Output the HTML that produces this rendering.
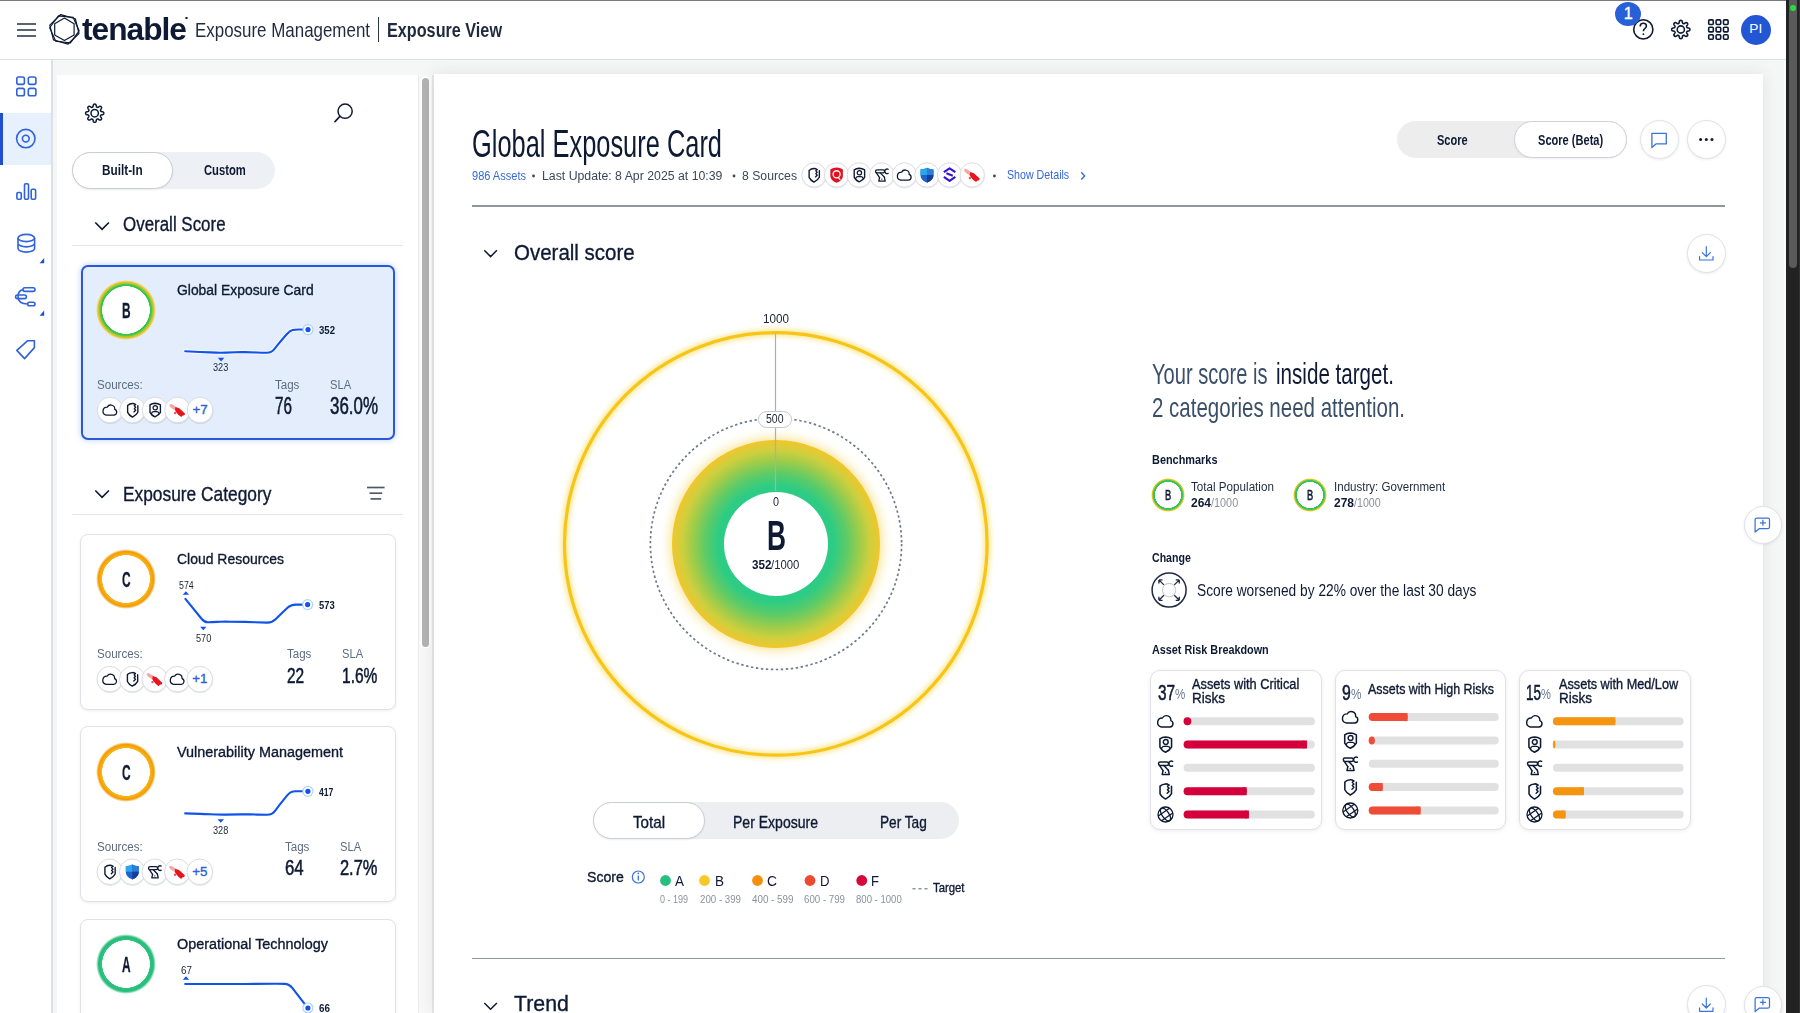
<!DOCTYPE html>
<html><head><meta charset="utf-8">
<style>
*{box-sizing:border-box;margin:0;padding:0}
html,body{width:1800px;height:1013px;overflow:hidden;background:#f5f6f6;font-family:"Liberation Sans",sans-serif;color:#0e1a33}
.a{position:absolute}
.t{position:absolute;white-space:nowrap;line-height:1;transform-origin:0 0}
.bd{font-weight:bold}
.m{-webkit-text-stroke:0.35px currentColor}
.sb{-webkit-text-stroke:0.55px currentColor}
.sl{-webkit-text-stroke:0.3px currentColor}
svg{position:absolute;overflow:visible}
#hdr{left:0;top:0;width:1786px;height:60px;background:#fff;border-top:1px solid #7a7a7a;border-bottom:1px solid #dcdfe4}
#nav{left:0;top:60px;width:53px;height:953px;background:#fff;border-right:2px solid #dde0e5}
#side{left:57px;top:75px;width:361px;height:938px;background:#fff}
#sbar{left:418px;top:75px;width:16px;height:938px;background:#f8f8f8;border-left:1px solid #eaeaea;border-right:2.5px solid #e8e8e8}
#sthumb{left:421.8px;top:78px;width:7.4px;height:568.7px;background:#b3b3b3;border-radius:4px;box-shadow:0 0 0 1.5px #fff}
#main{left:434px;top:74px;width:1328.5px;height:939px;background:#fff;box-shadow:0 0 16px rgba(0,0,0,.09)}
#rgut{left:1784px;top:60px;width:2px;height:953px;background:#fbfbfb}
#dark{left:1786px;top:0;width:14px;height:1013px;background:#222;border-right:1.3px solid #333}
#dark2{left:1789.3px;top:0;width:7.9px;height:268px;background:#5a5a5a;border-radius:0 0 4px 4px}
.nv{stroke:#2f62db;fill:none;stroke-width:1.6}
.dk{stroke:#0e1a33;fill:none;stroke-width:1.6}
</style></head><body>
<div id="hdr" class="a"></div>
<div id="nav" class="a"></div>
<div id="side" class="a"></div>
<div id="sbar" class="a"></div>
<div id="sthumb" class="a"></div>
<div id="main" class="a"></div>
<div id="rgut" class="a"></div>
<div id="dark" class="a"></div>
<div id="dark2" class="a"></div>
<div class="a" style="left:1789.5px;top:4.5px;width:6.5px;height:6.5px;border-radius:50%;background:#2bd940"></div>

<!-- HEADER -->
<svg style="left:0;top:0" width="1" height="1">
 <g stroke="#3a475b" stroke-width="1.7"><line x1="17" y1="24" x2="36" y2="24"></line><line x1="17" y1="30" x2="36" y2="30"></line><line x1="17" y1="36" x2="36" y2="36"></line></g>
 <g fill="none" stroke="#0e1a33" stroke-width="1.2" stroke-linejoin="round"><polygon points="64.40,18.10 74.10,23.70 74.10,34.90 64.40,40.50 54.70,34.90 54.70,23.70"></polygon><polygon points="60.72,14.55 75.33,18.74 79.01,33.49 68.08,44.05 53.47,39.86 49.79,25.11"></polygon><polygon points="58.38,15.78 73.10,17.33 79.12,30.85 70.42,42.82 55.70,41.27 49.68,27.75"></polygon></g>
</svg>
<span class="t bd" style="color: rgb(14, 26, 51); letter-spacing: -1px; font-size: 31.98px; top: 12.93px; transform: scaleX(0.9912); left: 82px;">tenable</span><div id="reg" class="a" style="left:185px;top:16.5px;width:2.6px;height:2.6px;border-radius:50%;border:0.7px solid #0e1a33"></div>
<span class="t" style="color: rgb(31, 42, 62); font-size: 20.93px; top: 19.68px; transform: scaleX(0.809); left: 195px;">Exposure Management</span>
<div class="a" style="left:377.5px;top:17px;width:1.5px;height:25px;background:#2a3548"></div>
<span class="t bd" style="color: rgb(31, 42, 62); font-size: 20.93px; top: 19.68px; transform: scaleX(0.7746); left: 387px;">Exposure View</span>

<svg style="left:0;top:0" width="1" height="1">
 <circle cx="1643.3" cy="29.4" r="9.6" class="dk" stroke-width="1.7"></circle>
 <path d="M1640.2 26.5 q0-3.2 3.1-3.2 q3.1 0 3.1 2.8 q0 1.6-1.6 2.5 q-1.4 0.8-1.4 2.6" class="dk" stroke-width="1.5"></path>
 <circle cx="1643.4" cy="34.2" r="0.9" fill="#0e1a33"></circle>
</svg>
<div class="a" style="left:1615px;top:1.5px;width:26px;height:24px;border-radius:50%;background:#2860d8"></div>
<span class="t m" style="color: rgb(255, 255, 255); font-size: 16.28px; top: 5.42px; left: 1623.78px;">1</span>
<svg style="left:0;top:0" width="1" height="1" id="hgear">
 <g transform="translate(1680.8 29.5)"><path class="dk" stroke-width="1.5" stroke-linejoin="round" d="M9.10 0.00 L9.09 0.24 L9.05 0.47 L8.98 0.71 L8.86 0.93 L8.65 1.14 L8.32 1.32 L7.86 1.46 L7.34 1.56 L6.88 1.65 L6.55 1.75 L6.32 1.87 L6.17 2.01 L6.07 2.15 L5.98 2.30 L5.91 2.45 L5.85 2.61 L5.81 2.77 L5.78 2.95 L5.79 3.15 L5.87 3.39 L6.04 3.70 L6.30 4.09 L6.59 4.53 L6.81 4.95 L6.92 5.31 L6.92 5.61 L6.85 5.85 L6.74 6.07 L6.60 6.26 L6.43 6.43 L6.26 6.60 L6.07 6.74 L5.85 6.85 L5.61 6.92 L5.31 6.92 L4.95 6.81 L4.53 6.59 L4.09 6.30 L3.70 6.04 L3.39 5.87 L3.15 5.79 L2.95 5.78 L2.77 5.81 L2.61 5.85 L2.45 5.91 L2.30 5.98 L2.15 6.07 L2.01 6.17 L1.87 6.32 L1.75 6.55 L1.65 6.88 L1.56 7.34 L1.46 7.86 L1.32 8.32 L1.14 8.65 L0.93 8.86 L0.71 8.98 L0.47 9.05 L0.24 9.09 L0.00 9.10 L-0.24 9.09 L-0.47 9.05 L-0.71 8.98 L-0.93 8.86 L-1.14 8.65 L-1.32 8.32 L-1.46 7.86 L-1.56 7.34 L-1.65 6.88 L-1.75 6.55 L-1.87 6.32 L-2.01 6.17 L-2.15 6.07 L-2.30 5.98 L-2.45 5.91 L-2.61 5.85 L-2.77 5.81 L-2.95 5.78 L-3.15 5.79 L-3.39 5.87 L-3.70 6.04 L-4.09 6.30 L-4.53 6.59 L-4.95 6.81 L-5.31 6.92 L-5.61 6.92 L-5.85 6.85 L-6.07 6.74 L-6.26 6.60 L-6.43 6.43 L-6.60 6.26 L-6.74 6.07 L-6.85 5.85 L-6.92 5.61 L-6.92 5.31 L-6.81 4.95 L-6.59 4.53 L-6.30 4.09 L-6.04 3.70 L-5.87 3.39 L-5.79 3.15 L-5.78 2.95 L-5.81 2.77 L-5.85 2.61 L-5.91 2.45 L-5.98 2.30 L-6.07 2.15 L-6.17 2.01 L-6.32 1.87 L-6.55 1.75 L-6.88 1.65 L-7.34 1.56 L-7.86 1.46 L-8.32 1.32 L-8.65 1.14 L-8.86 0.93 L-8.98 0.71 L-9.05 0.47 L-9.09 0.24 L-9.10 0.00 L-9.09 -0.24 L-9.05 -0.47 L-8.98 -0.71 L-8.86 -0.93 L-8.65 -1.14 L-8.32 -1.32 L-7.86 -1.46 L-7.34 -1.56 L-6.88 -1.65 L-6.55 -1.75 L-6.32 -1.87 L-6.17 -2.01 L-6.07 -2.15 L-5.98 -2.30 L-5.91 -2.45 L-5.85 -2.61 L-5.81 -2.77 L-5.78 -2.95 L-5.79 -3.15 L-5.87 -3.39 L-6.04 -3.70 L-6.30 -4.09 L-6.59 -4.53 L-6.81 -4.95 L-6.92 -5.31 L-6.92 -5.61 L-6.85 -5.85 L-6.74 -6.07 L-6.60 -6.26 L-6.43 -6.43 L-6.26 -6.60 L-6.07 -6.74 L-5.85 -6.85 L-5.61 -6.92 L-5.31 -6.92 L-4.95 -6.81 L-4.53 -6.59 L-4.09 -6.30 L-3.70 -6.04 L-3.39 -5.87 L-3.15 -5.79 L-2.95 -5.78 L-2.77 -5.81 L-2.61 -5.85 L-2.45 -5.91 L-2.30 -5.98 L-2.15 -6.07 L-2.01 -6.17 L-1.87 -6.32 L-1.75 -6.55 L-1.65 -6.88 L-1.56 -7.34 L-1.46 -7.86 L-1.32 -8.32 L-1.14 -8.65 L-0.93 -8.86 L-0.71 -8.98 L-0.47 -9.05 L-0.24 -9.09 L-0.00 -9.10 L0.24 -9.09 L0.47 -9.05 L0.71 -8.98 L0.93 -8.86 L1.14 -8.65 L1.32 -8.32 L1.46 -7.86 L1.56 -7.34 L1.65 -6.88 L1.75 -6.55 L1.87 -6.32 L2.01 -6.17 L2.15 -6.07 L2.30 -5.98 L2.45 -5.91 L2.61 -5.85 L2.77 -5.81 L2.95 -5.78 L3.15 -5.79 L3.39 -5.87 L3.70 -6.04 L4.09 -6.30 L4.53 -6.59 L4.95 -6.81 L5.31 -6.92 L5.61 -6.92 L5.85 -6.85 L6.07 -6.74 L6.26 -6.60 L6.43 -6.43 L6.60 -6.26 L6.74 -6.07 L6.85 -5.85 L6.92 -5.61 L6.92 -5.31 L6.81 -4.95 L6.59 -4.53 L6.30 -4.09 L6.04 -3.70 L5.87 -3.39 L5.79 -3.15 L5.78 -2.95 L5.81 -2.77 L5.85 -2.61 L5.91 -2.45 L5.98 -2.30 L6.07 -2.15 L6.17 -2.01 L6.32 -1.87 L6.55 -1.75 L6.88 -1.65 L7.34 -1.56 L7.86 -1.46 L8.32 -1.32 L8.65 -1.14 L8.86 -0.93 L8.98 -0.71 L9.05 -0.47 L9.09 -0.24 Z"></path><circle r="3.6" class="dk" stroke-width="1.5"></circle></g>
</svg>
<svg style="left:0;top:0" width="1" height="1">
 <g class="dk" stroke-width="1.4">
  <rect x="1708.7" y="19.9" width="4.6" height="4.6" rx="1"></rect><rect x="1716.1" y="19.9" width="4.6" height="4.6" rx="1"></rect><rect x="1723.5" y="19.9" width="4.6" height="4.6" rx="1"></rect>
  <rect x="1708.7" y="27.3" width="4.6" height="4.6" rx="1"></rect><rect x="1716.1" y="27.3" width="4.6" height="4.6" rx="1"></rect><rect x="1723.5" y="27.3" width="4.6" height="4.6" rx="1"></rect>
  <rect x="1708.7" y="34.7" width="4.6" height="4.6" rx="1"></rect><rect x="1716.1" y="34.7" width="4.6" height="4.6" rx="1"></rect><rect x="1723.5" y="34.7" width="4.6" height="4.6" rx="1"></rect>
 </g>
</svg>
<div class="a" style="left:1740.6px;top:14.5px;width:30px;height:30px;border-radius:50%;background:#2356d4"></div>
<span class="t" style="color: rgb(255, 255, 255); font-size: 13.66px; top: 22.43px; left: 1749.35px;">PI</span>

<!-- NAV -->
<div class="a" style="left:0;top:112.6px;width:51px;height:52.3px;background:#e7f1fd"></div>
<div class="a" style="left:0;top:112.6px;width:2.5px;height:52.3px;background:#1f4fd0"></div>
<svg style="left:0;top:0" width="1" height="1">
 <g class="nv" stroke-width="1.5">
  <rect x="16.8" y="77" width="7.6" height="7.4" rx="1.8"></rect><rect x="28.3" y="77" width="7.6" height="7.4" rx="1.8"></rect>
  <rect x="16.8" y="88.4" width="7.6" height="7.4" rx="1.8"></rect><rect x="28.3" y="88.4" width="7.6" height="7.4" rx="1.8"></rect>
  <circle cx="25.8" cy="138.6" r="9.2"></circle><circle cx="25.8" cy="138.6" r="3.4"></circle>
  <rect x="16.9" y="192.5" width="4.4" height="6.8" rx="1.2"></rect><rect x="24.5" y="183.8" width="4" height="15.5" rx="1.2"></rect><rect x="31.2" y="189.3" width="4.4" height="10" rx="1.2"></rect>
  <ellipse cx="26.3" cy="238" rx="8.3" ry="3.6"></ellipse>
  <path d="M18 238 v10.5 a8.3 3.6 0 0 0 16.6 0 v-10.5 M18 243.3 a8.3 3.6 0 0 0 16.6 0"></path>
  <rect x="23" y="287.8" width="12" height="3.6" rx="1.8"></rect><rect x="15.6" y="295" width="10.8" height="3.6" rx="1.8"></rect><rect x="27.6" y="302.2" width="7.4" height="3.6" rx="1.8"></rect>
  <path d="M23 289.6 q-5 1 -5 7.2 q0 7 9.6 7.2"></path>
  <path d="M16.8 350.4 L27.5 340.8 L34.4 340.8 L34.4 347.6 L24.6 358.6 Z" stroke-linejoin="round"></path>
 </g>
 <polygon points="44.2,258 44.2,263.2 39.6,263.2" fill="#1f4fd0"></polygon>
 <polygon points="44.2,310.6 44.2,315.8 39.6,315.8" fill="#1f4fd0"></polygon>
</svg>


<svg style="left:0;top:0" width="1" height="1"><g transform="translate(94.7 113.2)"><path d="M9.10 0.00 L9.09 0.24 L9.05 0.47 L8.98 0.71 L8.86 0.93 L8.65 1.14 L8.32 1.32 L7.86 1.46 L7.34 1.56 L6.88 1.65 L6.55 1.75 L6.32 1.87 L6.17 2.01 L6.07 2.15 L5.98 2.30 L5.91 2.45 L5.85 2.61 L5.81 2.77 L5.78 2.95 L5.79 3.15 L5.87 3.39 L6.04 3.70 L6.30 4.09 L6.59 4.53 L6.81 4.95 L6.92 5.31 L6.92 5.61 L6.85 5.85 L6.74 6.07 L6.60 6.26 L6.43 6.43 L6.26 6.60 L6.07 6.74 L5.85 6.85 L5.61 6.92 L5.31 6.92 L4.95 6.81 L4.53 6.59 L4.09 6.30 L3.70 6.04 L3.39 5.87 L3.15 5.79 L2.95 5.78 L2.77 5.81 L2.61 5.85 L2.45 5.91 L2.30 5.98 L2.15 6.07 L2.01 6.17 L1.87 6.32 L1.75 6.55 L1.65 6.88 L1.56 7.34 L1.46 7.86 L1.32 8.32 L1.14 8.65 L0.93 8.86 L0.71 8.98 L0.47 9.05 L0.24 9.09 L0.00 9.10 L-0.24 9.09 L-0.47 9.05 L-0.71 8.98 L-0.93 8.86 L-1.14 8.65 L-1.32 8.32 L-1.46 7.86 L-1.56 7.34 L-1.65 6.88 L-1.75 6.55 L-1.87 6.32 L-2.01 6.17 L-2.15 6.07 L-2.30 5.98 L-2.45 5.91 L-2.61 5.85 L-2.77 5.81 L-2.95 5.78 L-3.15 5.79 L-3.39 5.87 L-3.70 6.04 L-4.09 6.30 L-4.53 6.59 L-4.95 6.81 L-5.31 6.92 L-5.61 6.92 L-5.85 6.85 L-6.07 6.74 L-6.26 6.60 L-6.43 6.43 L-6.60 6.26 L-6.74 6.07 L-6.85 5.85 L-6.92 5.61 L-6.92 5.31 L-6.81 4.95 L-6.59 4.53 L-6.30 4.09 L-6.04 3.70 L-5.87 3.39 L-5.79 3.15 L-5.78 2.95 L-5.81 2.77 L-5.85 2.61 L-5.91 2.45 L-5.98 2.30 L-6.07 2.15 L-6.17 2.01 L-6.32 1.87 L-6.55 1.75 L-6.88 1.65 L-7.34 1.56 L-7.86 1.46 L-8.32 1.32 L-8.65 1.14 L-8.86 0.93 L-8.98 0.71 L-9.05 0.47 L-9.09 0.24 L-9.10 0.00 L-9.09 -0.24 L-9.05 -0.47 L-8.98 -0.71 L-8.86 -0.93 L-8.65 -1.14 L-8.32 -1.32 L-7.86 -1.46 L-7.34 -1.56 L-6.88 -1.65 L-6.55 -1.75 L-6.32 -1.87 L-6.17 -2.01 L-6.07 -2.15 L-5.98 -2.30 L-5.91 -2.45 L-5.85 -2.61 L-5.81 -2.77 L-5.78 -2.95 L-5.79 -3.15 L-5.87 -3.39 L-6.04 -3.70 L-6.30 -4.09 L-6.59 -4.53 L-6.81 -4.95 L-6.92 -5.31 L-6.92 -5.61 L-6.85 -5.85 L-6.74 -6.07 L-6.60 -6.26 L-6.43 -6.43 L-6.26 -6.60 L-6.07 -6.74 L-5.85 -6.85 L-5.61 -6.92 L-5.31 -6.92 L-4.95 -6.81 L-4.53 -6.59 L-4.09 -6.30 L-3.70 -6.04 L-3.39 -5.87 L-3.15 -5.79 L-2.95 -5.78 L-2.77 -5.81 L-2.61 -5.85 L-2.45 -5.91 L-2.30 -5.98 L-2.15 -6.07 L-2.01 -6.17 L-1.87 -6.32 L-1.75 -6.55 L-1.65 -6.88 L-1.56 -7.34 L-1.46 -7.86 L-1.32 -8.32 L-1.14 -8.65 L-0.93 -8.86 L-0.71 -8.98 L-0.47 -9.05 L-0.24 -9.09 L-0.00 -9.10 L0.24 -9.09 L0.47 -9.05 L0.71 -8.98 L0.93 -8.86 L1.14 -8.65 L1.32 -8.32 L1.46 -7.86 L1.56 -7.34 L1.65 -6.88 L1.75 -6.55 L1.87 -6.32 L2.01 -6.17 L2.15 -6.07 L2.30 -5.98 L2.45 -5.91 L2.61 -5.85 L2.77 -5.81 L2.95 -5.78 L3.15 -5.79 L3.39 -5.87 L3.70 -6.04 L4.09 -6.30 L4.53 -6.59 L4.95 -6.81 L5.31 -6.92 L5.61 -6.92 L5.85 -6.85 L6.07 -6.74 L6.26 -6.60 L6.43 -6.43 L6.60 -6.26 L6.74 -6.07 L6.85 -5.85 L6.92 -5.61 L6.92 -5.31 L6.81 -4.95 L6.59 -4.53 L6.30 -4.09 L6.04 -3.70 L5.87 -3.39 L5.79 -3.15 L5.78 -2.95 L5.81 -2.77 L5.85 -2.61 L5.91 -2.45 L5.98 -2.30 L6.07 -2.15 L6.17 -2.01 L6.32 -1.87 L6.55 -1.75 L6.88 -1.65 L7.34 -1.56 L7.86 -1.46 L8.32 -1.32 L8.65 -1.14 L8.86 -0.93 L8.98 -0.71 L9.05 -0.47 L9.09 -0.24 Z" fill="none" stroke="#0e1a33" stroke-width="1.5" stroke-linejoin="round"></path><circle r="3.7" fill="none" stroke="#0e1a33" stroke-width="1.5"></circle></g></svg>
<svg style="left:0;top:0" width="1" height="1"><circle cx="345.1" cy="111.2" r="7.1" fill="none" stroke="#0e1a33" stroke-width="1.5"></circle><line x1="339.9" y1="116.4" x2="335" y2="121.6" stroke="#0e1a33" stroke-width="1.6" stroke-linecap="round"></line></svg>
<div class="a" style="left:72px;top:152px;width:203px;height:37px;border-radius:19px;background:#edf0f5"></div>
<div class="a" style="left:72px;top:152px;width:101px;height:37px;border-radius:19px;background:#fff;border:1px solid #c9cdd4;box-shadow:0 1px 2px rgba(0,0,0,.08)"></div>
<span class="t bd" style="color: rgb(14, 26, 51); font-size: 13.95px; top: 164.19px; transform: scaleX(0.8458); left: 102.4px;">Built-In</span>
<span class="t bd" style="color: rgb(14, 26, 51); font-size: 13.95px; top: 164.19px; transform: scaleX(0.8055); left: 203.6px;">Custom</span>
<svg style="left:0;top:0" width="1" height="1"><path d="M95.3 222.5 l6.8 6.8 l6.8-6.8" fill="none" stroke="#0e1a33" stroke-width="1.7"></path></svg>
<span class="t m" style="color: rgb(14, 26, 51); font-size: 19.77px; top: 214.57px; transform: scaleX(0.8569); left: 123px;">Overall Score</span>
<div class="a" style="left:72px;top:244.6px;width:331px;height:1.6px;background:#dfe5ee"></div>
<div class="a" style="left:81px;top:265px;width:314px;height:174.5px;border-radius:7px;background:#e4edfb;border:2px solid #2a58d6;box-shadow:0 0 6px rgba(60,120,240,.35)"></div>
<div class="a" style="left:95.5px;top:280px;width:60px;height:60px;border-radius:50%;background:radial-gradient(circle,#fff 0,#fff 23.6px,#2fc64c 24.1px,#3cc64a 25.3px,#9cc83a 26.6px,#ecc21c 27.9px,rgba(240,196,28,.55) 28.9px,rgba(240,196,28,0) 30px)"></div>
<span class="t bd sl" style="color: rgb(14, 26, 51); font-size: 22.38px; top: 299.85px; transform: scaleX(0.5318); left: 121.8px;">B</span>
<span class="t m" style="color: rgb(14, 26, 51); font-size: 14.53px; top: 283.1px; transform: scaleX(0.9565); left: 177px;">Global Exposure Card</span>
<svg style="left:0;top:0" width="1" height="1"><path d="M185.20 351.30 L200.01 351.97 Q205.00 352.20 210.00 352.39 L216.00 352.61 Q221.00 352.80 226.00 352.59 L235.00 352.21 Q240.00 352.00 245.00 352.14 L257.00 352.46 Q262.00 352.60 266.60 352.80 L266.60 352.80 Q271.20 353.00 274.32 349.10 L276.88 345.90 Q280.00 342.00 283.28 338.23 L286.72 334.27 Q290.00 330.50 292.50 329.95 L292.50 329.95 Q295.00 329.40 300.00 329.48 L308.00 329.60" fill="none" stroke="#fff" stroke-width="4" stroke-linejoin="round" stroke-linecap="round" opacity=".85"></path><path d="M185.20 351.30 L200.01 351.97 Q205.00 352.20 210.00 352.39 L216.00 352.61 Q221.00 352.80 226.00 352.59 L235.00 352.21 Q240.00 352.00 245.00 352.14 L257.00 352.46 Q262.00 352.60 266.60 352.80 L266.60 352.80 Q271.20 353.00 274.32 349.10 L276.88 345.90 Q280.00 342.00 283.28 338.23 L286.72 334.27 Q290.00 330.50 292.50 329.95 L292.50 329.95 Q295.00 329.40 300.00 329.48 L308.00 329.60" fill="none" stroke="#0f52ec" stroke-width="2.1" stroke-linejoin="round" stroke-linecap="round"></path><circle cx="308.0" cy="329.6" r="5.6" fill="#a9cdfb" opacity=".9"></circle><circle cx="308.0" cy="329.6" r="4.4" fill="#fff"></circle><circle cx="308.0" cy="329.6" r="2.6" fill="#0f52ec"></circle></svg>
<span class="t bd" style="color: rgb(14, 26, 51); font-size: 10.76px; top: 324.5px; transform: scaleX(0.892); left: 319.3px;">352</span>
<svg style="left:0;top:0" width="1" height="1"><polygon points="217.9,357.8 224.3,357.8 221.1,361.4" fill="#0f52ec"></polygon></svg>
<span class="t " style="color: rgb(28, 37, 54); font-size: 10.32px; top: 362.76px; transform: scaleX(0.8886); left: 213.05px;">323</span>
<span class="t " style="color: rgb(93, 108, 128); font-size: 12.5px; top: 379.22px; transform: scaleX(0.9262); left: 97.3px;">Sources:</span>
<svg style="left:0;top:0" width="1" height="1"><g filter=""><circle cx="110.30" cy="410.90" r="13.20" fill="rgba(30,50,90,.10)"></circle><circle cx="110.00" cy="410.00" r="12.80" fill="#fff" stroke="#d9dde4" stroke-width="1"></circle><svg x="101.50" y="401.50" width="17" height="17" viewBox="0 0 16 16" overflow="visible"><path d="M4.4 12.9 H11.8 A2.8 2.8 0 0 0 12.5 7.5 A3.8 3.8 0 0 0 5.4 5.3 A3.85 3.85 0 0 0 4.4 12.9 Z" fill="none" stroke="#0e1a33" stroke-width="1.2" stroke-linejoin="round"></path></svg><circle cx="132.80" cy="410.90" r="13.20" fill="rgba(30,50,90,.10)"></circle><circle cx="132.50" cy="410.00" r="12.80" fill="#fff" stroke="#d9dde4" stroke-width="1"></circle><svg x="124.00" y="401.50" width="17" height="17" viewBox="0 0 16 16" overflow="visible"><path d="M10.9 2.8 C9.6 1.9 8.7 1.8 8 1.85 C6.2 1.95 4.4 2.8 3.4 3.7 V10.2 C4.5 12.6 6.3 13.8 8 14.65 C9.7 13.8 11.8 12.6 13.05 10.1 V3.9" fill="none" stroke="#0e1a33" stroke-width="1.3" stroke-linejoin="round" stroke-linecap="round"></path><path d="M10.9 2.8 L9.7 4 L11 5.5 L9.7 6.7 L11 8.2 L9.4 9.8" fill="none" stroke="#0e1a33" stroke-width="1.25" stroke-linejoin="round" stroke-linecap="round"></path></svg><circle cx="155.30" cy="410.90" r="13.20" fill="rgba(30,50,90,.10)"></circle><circle cx="155.00" cy="410.00" r="12.80" fill="#fff" stroke="#d9dde4" stroke-width="1"></circle><svg x="146.50" y="401.50" width="17" height="17" viewBox="0 0 16 16" overflow="visible"><path d="M8 1.7 C6.2 1.8 4.4 2.4 3.3 3.2 V10.2 C4.4 12.4 6.2 13.7 8 14.5 C9.8 13.7 11.9 12.4 13.1 10.2 V3.2 C11.8 2.4 9.8 1.8 8 1.7 Z" fill="none" stroke="#0e1a33" stroke-width="1.3" stroke-linejoin="round"></path><circle cx="8.2" cy="5.9" r="2.05" fill="none" stroke="#0e1a33" stroke-width="1.2"></circle><path d="M4.5 11.7 C5 10.2 5.6 9.6 6.4 9.6 H10 C10.8 9.6 11.5 10.2 12 11.7" fill="none" stroke="#0e1a33" stroke-width="1.2"></path></svg><circle cx="177.80" cy="410.90" r="13.20" fill="rgba(30,50,90,.10)"></circle><circle cx="177.50" cy="410.00" r="12.80" fill="#fff" stroke="#d9dde4" stroke-width="1"></circle><svg x="169.00" y="401.50" width="17" height="17" viewBox="0 0 16 16" overflow="visible"><path d="M0.4 2.4 L3 2.7 L7 5.3 L6.4 8.6 L2.6 6.3 L0.7 4.6 Z" fill="#f05a5a" opacity=".55"></path><path d="M6 5.1 L9.6 6.3 L12 8.5 L15.2 11.6 L14.4 13 L12.6 13.3 L11.7 14.7 L9 12.6 L6.6 9.9 L5.7 8.1 Z" fill="#e8141c"></path><circle cx="5.8" cy="10.8" r="1.1" fill="#e8141c" opacity=".75"></circle></svg><circle cx="200.30" cy="410.90" r="13.20" fill="rgba(30,50,90,.10)"></circle><circle cx="200.00" cy="410.00" r="12.80" fill="#fff" stroke="#d9dde4" stroke-width="1"></circle></g></svg>
<span class="t m" style="color: rgb(44, 95, 217); font-size: 13.37px; top: 403.28px; left: 192.38px;">+7</span>
<span class="t " style="color: rgb(93, 108, 128); font-size: 12.5px; top: 379.22px; transform: scaleX(0.924); left: 274.5px;">Tags</span>
<span class="t " style="color: rgb(93, 108, 128); font-size: 12.5px; top: 379.22px; transform: scaleX(0.8925); left: 329.5px;">SLA</span>
<span class="t sb" style="color: rgb(14, 26, 51); font-size: 23.26px; top: 394.71px; transform: scaleX(0.657); left: 274.5px;">76</span>
<span class="t sb" style="color: rgb(14, 26, 51); font-size: 23.26px; top: 394.71px; transform: scaleX(0.728); left: 329.5px;">36.0%</span>
<svg style="left:0;top:0" width="1" height="1"><path d="M95.3 490.5 l6.8 6.8 l6.8-6.8" fill="none" stroke="#0e1a33" stroke-width="1.7"></path></svg>
<span class="t m" style="color: rgb(14, 26, 51); font-size: 20.2px; top: 483.5px; transform: scaleX(0.8587); left: 123.3px;">Exposure Category</span>
<svg style="left:0;top:0" width="1" height="1"><g stroke="#4f5b6d" stroke-width="1.7"><line x1="367" y1="487.5" x2="384.6" y2="487.5"></line><line x1="369.5" y1="493.2" x2="382.2" y2="493.2"></line><line x1="370.5" y1="498.9" x2="381.2" y2="498.9"></line></g></svg>
<div class="a" style="left:72px;top:513.8px;width:331px;height:1.6px;background:#dfe5ee"></div>
<div class="a" style="left:80.2px;top:533.6px;width:315.4px;height:176px;border-radius:8px;background:#fff;border:1.5px solid #dfe2e7;box-shadow:0 1px 3px rgba(0,0,0,.07)"></div>
<div class="a" style="left:95.6px;top:548.9px;width:60px;height:60px;border-radius:50%;background:radial-gradient(circle,#fff 0,#fff 23.6px,#f8b615 24.1px,#f6aa0c 25.8px,#f39a05 27.6px,rgba(243,154,5,.5) 28.8px,rgba(243,154,5,0) 30px)"></div>
<span class="t bd sl" style="color: rgb(14, 26, 51); font-size: 22.38px; top: 568.85px; transform: scaleX(0.5318); left: 121.8px;">C</span>
<span class="t m" style="color: rgb(14, 26, 51); font-size: 14.83px; top: 551.95px; transform: scaleX(0.9407); left: 176.8px;">Cloud Resources</span>
<svg style="left:0;top:0" width="1" height="1"><path d="M185.40 598.80 L201.55 618.72 Q204.70 622.60 208.35 622.30 L208.35 622.30 Q212.00 622.00 217.00 621.85 L220.00 621.75 Q225.00 621.60 230.00 621.68 L245.00 621.92 Q250.00 622.00 255.00 622.18 L267.00 622.62 Q272.00 622.80 275.57 619.30 L278.43 616.50 Q282.00 613.00 285.64 609.57 L287.26 608.03 Q290.90 604.60 295.90 604.60 L307.60 604.60" fill="none" stroke="#fff" stroke-width="4" stroke-linejoin="round" stroke-linecap="round" opacity=".85"></path><path d="M185.40 598.80 L201.55 618.72 Q204.70 622.60 208.35 622.30 L208.35 622.30 Q212.00 622.00 217.00 621.85 L220.00 621.75 Q225.00 621.60 230.00 621.68 L245.00 621.92 Q250.00 622.00 255.00 622.18 L267.00 622.62 Q272.00 622.80 275.57 619.30 L278.43 616.50 Q282.00 613.00 285.64 609.57 L287.26 608.03 Q290.90 604.60 295.90 604.60 L307.60 604.60" fill="none" stroke="#0f52ec" stroke-width="2.1" stroke-linejoin="round" stroke-linecap="round"></path><circle cx="307.6" cy="604.6" r="5.6" fill="#a9cdfb" opacity=".9"></circle><circle cx="307.6" cy="604.6" r="4.4" fill="#fff"></circle><circle cx="307.6" cy="604.6" r="2.6" fill="#0f52ec"></circle></svg>
<span class="t bd" style="color: rgb(14, 26, 51); font-size: 10.76px; top: 599.9px; transform: scaleX(0.8753); left: 319.3px;">573</span>
<span class="t " style="color: rgb(28, 37, 54); font-size: 10.76px; top: 579.6px; transform: scaleX(0.8195); left: 178.55px;">574</span>
<svg style="left:0;top:0" width="1" height="1"><polygon points="185.9,591.2 182.7,594.8 189.1,594.8" fill="#0f52ec"></polygon></svg>
<span class="t " style="color: rgb(28, 37, 54); font-size: 10.76px; top: 632.7px; transform: scaleX(0.853); left: 195.65px;">570</span>
<svg style="left:0;top:0" width="1" height="1"><polygon points="200.1,626.7 206.5,626.7 203.3,630.3" fill="#0f52ec"></polygon></svg>
<span class="t " style="color: rgb(93, 108, 128); font-size: 12.5px; top: 647.92px; transform: scaleX(0.9262); left: 97.4px;">Sources:</span>
<svg style="left:0;top:0" width="1" height="1"><g filter=""><circle cx="110.10" cy="680.00" r="13.20" fill="rgba(30,50,90,.10)"></circle><circle cx="109.80" cy="679.10" r="12.80" fill="#fff" stroke="#d9dde4" stroke-width="1"></circle><svg x="101.30" y="670.60" width="17" height="17" viewBox="0 0 16 16" overflow="visible"><path d="M4.4 12.9 H11.8 A2.8 2.8 0 0 0 12.5 7.5 A3.8 3.8 0 0 0 5.4 5.3 A3.85 3.85 0 0 0 4.4 12.9 Z" fill="none" stroke="#0e1a33" stroke-width="1.2" stroke-linejoin="round"></path></svg><circle cx="132.60" cy="680.00" r="13.20" fill="rgba(30,50,90,.10)"></circle><circle cx="132.30" cy="679.10" r="12.80" fill="#fff" stroke="#d9dde4" stroke-width="1"></circle><svg x="123.80" y="670.60" width="17" height="17" viewBox="0 0 16 16" overflow="visible"><path d="M10.9 2.8 C9.6 1.9 8.7 1.8 8 1.85 C6.2 1.95 4.4 2.8 3.4 3.7 V10.2 C4.5 12.6 6.3 13.8 8 14.65 C9.7 13.8 11.8 12.6 13.05 10.1 V3.9" fill="none" stroke="#0e1a33" stroke-width="1.3" stroke-linejoin="round" stroke-linecap="round"></path><path d="M10.9 2.8 L9.7 4 L11 5.5 L9.7 6.7 L11 8.2 L9.4 9.8" fill="none" stroke="#0e1a33" stroke-width="1.25" stroke-linejoin="round" stroke-linecap="round"></path></svg><circle cx="155.10" cy="680.00" r="13.20" fill="rgba(30,50,90,.10)"></circle><circle cx="154.80" cy="679.10" r="12.80" fill="#fff" stroke="#d9dde4" stroke-width="1"></circle><svg x="146.30" y="670.60" width="17" height="17" viewBox="0 0 16 16" overflow="visible"><path d="M0.4 2.4 L3 2.7 L7 5.3 L6.4 8.6 L2.6 6.3 L0.7 4.6 Z" fill="#f05a5a" opacity=".55"></path><path d="M6 5.1 L9.6 6.3 L12 8.5 L15.2 11.6 L14.4 13 L12.6 13.3 L11.7 14.7 L9 12.6 L6.6 9.9 L5.7 8.1 Z" fill="#e8141c"></path><circle cx="5.8" cy="10.8" r="1.1" fill="#e8141c" opacity=".75"></circle></svg><circle cx="177.60" cy="680.00" r="13.20" fill="rgba(30,50,90,.10)"></circle><circle cx="177.30" cy="679.10" r="12.80" fill="#fff" stroke="#d9dde4" stroke-width="1"></circle><svg x="168.80" y="670.60" width="17" height="17" viewBox="0 0 16 16" overflow="visible"><path d="M4.4 12.9 H11.8 A2.8 2.8 0 0 0 12.5 7.5 A3.8 3.8 0 0 0 5.4 5.3 A3.85 3.85 0 0 0 4.4 12.9 Z" fill="none" stroke="#0e1a33" stroke-width="1.2" stroke-linejoin="round"></path></svg><circle cx="200.10" cy="680.00" r="13.20" fill="rgba(30,50,90,.10)"></circle><circle cx="199.80" cy="679.10" r="12.80" fill="#fff" stroke="#d9dde4" stroke-width="1"></circle></g></svg>
<span class="t m" style="color: rgb(44, 95, 217); font-size: 13.37px; top: 672.38px; left: 192.18px;">+1</span>
<span class="t " style="color: rgb(93, 108, 128); font-size: 12.5px; top: 647.92px; transform: scaleX(0.924); left: 286.8px;">Tags</span>
<span class="t " style="color: rgb(93, 108, 128); font-size: 12.5px; top: 647.92px; transform: scaleX(0.8925); left: 341.7px;">SLA</span>
<span class="t sb" style="color: rgb(14, 26, 51); font-size: 22.24px; top: 664.78px; transform: scaleX(0.6954); left: 286.8px;">22</span>
<span class="t sb" style="color: rgb(14, 26, 51); font-size: 22.24px; top: 664.78px; transform: scaleX(0.6984); left: 341.7px;">1.6%</span>
<div class="a" style="left:80.2px;top:726.3px;width:315.4px;height:176px;border-radius:8px;background:#fff;border:1.5px solid #dfe2e7;box-shadow:0 1px 3px rgba(0,0,0,.07)"></div>
<div class="a" style="left:95.6px;top:741.5999999999999px;width:60px;height:60px;border-radius:50%;background:radial-gradient(circle,#fff 0,#fff 23.6px,#f8b615 24.1px,#f6aa0c 25.8px,#f39a05 27.6px,rgba(243,154,5,.5) 28.8px,rgba(243,154,5,0) 30px)"></div>
<span class="t bd sl" style="color: rgb(14, 26, 51); font-size: 22.38px; top: 761.55px; transform: scaleX(0.5318); left: 121.8px;">C</span>
<span class="t m" style="color: rgb(14, 26, 51); font-size: 14.83px; top: 744.65px; transform: scaleX(0.9713); left: 176.8px;">Vulnerability Management</span>
<svg style="left:0;top:0" width="1" height="1"><path d="M185.20 813.40 L200.00 813.85 Q205.00 814.00 210.00 814.22 L216.00 814.48 Q221.00 814.70 226.00 814.62 L240.00 814.38 Q245.00 814.30 250.00 814.42 L257.00 814.58 Q262.00 814.70 267.00 814.75 L267.00 814.75 Q272.00 814.80 275.03 810.83 L278.97 805.67 Q282.00 801.70 285.19 797.85 L287.41 795.15 Q290.60 791.30 295.60 791.30 L307.90 791.30" fill="none" stroke="#fff" stroke-width="4" stroke-linejoin="round" stroke-linecap="round" opacity=".85"></path><path d="M185.20 813.40 L200.00 813.85 Q205.00 814.00 210.00 814.22 L216.00 814.48 Q221.00 814.70 226.00 814.62 L240.00 814.38 Q245.00 814.30 250.00 814.42 L257.00 814.58 Q262.00 814.70 267.00 814.75 L267.00 814.75 Q272.00 814.80 275.03 810.83 L278.97 805.67 Q282.00 801.70 285.19 797.85 L287.41 795.15 Q290.60 791.30 295.60 791.30 L307.90 791.30" fill="none" stroke="#0f52ec" stroke-width="2.1" stroke-linejoin="round" stroke-linecap="round"></path><circle cx="307.9" cy="791.3" r="5.6" fill="#a9cdfb" opacity=".9"></circle><circle cx="307.9" cy="791.3" r="4.4" fill="#fff"></circle><circle cx="307.9" cy="791.3" r="2.6" fill="#0f52ec"></circle></svg>
<span class="t bd" style="color: rgb(14, 26, 51); font-size: 10.76px; top: 786.6px; transform: scaleX(0.8028); left: 319.3px;">417</span>
<span class="t " style="color: rgb(28, 37, 54); font-size: 10.76px; top: 825.2px; transform: scaleX(0.853); left: 213.15px;">328</span>
<svg style="left:0;top:0" width="1" height="1"><polygon points="217.6,819.2 224.0,819.2 220.8,822.8" fill="#0f52ec"></polygon></svg>
<span class="t " style="color: rgb(93, 108, 128); font-size: 12.5px; top: 840.62px; transform: scaleX(0.9262); left: 97.4px;">Sources:</span>
<svg style="left:0;top:0" width="1" height="1"><g filter=""><circle cx="110.10" cy="872.70" r="13.20" fill="rgba(30,50,90,.10)"></circle><circle cx="109.80" cy="871.80" r="12.80" fill="#fff" stroke="#d9dde4" stroke-width="1"></circle><svg x="101.30" y="863.30" width="17" height="17" viewBox="0 0 16 16" overflow="visible"><path d="M10.9 2.8 C9.6 1.9 8.7 1.8 8 1.85 C6.2 1.95 4.4 2.8 3.4 3.7 V10.2 C4.5 12.6 6.3 13.8 8 14.65 C9.7 13.8 11.8 12.6 13.05 10.1 V3.9" fill="none" stroke="#0e1a33" stroke-width="1.3" stroke-linejoin="round" stroke-linecap="round"></path><path d="M10.9 2.8 L9.7 4 L11 5.5 L9.7 6.7 L11 8.2 L9.4 9.8" fill="none" stroke="#0e1a33" stroke-width="1.25" stroke-linejoin="round" stroke-linecap="round"></path></svg><circle cx="132.60" cy="872.70" r="13.20" fill="rgba(30,50,90,.10)"></circle><circle cx="132.30" cy="871.80" r="12.80" fill="#fff" stroke="#d9dde4" stroke-width="1"></circle><svg x="123.80" y="863.30" width="17" height="17" viewBox="0 0 16 16" overflow="visible"><path d="M8 1.2 C6 2.4 4 2.8 1.9 2.8 V8.2 C1.9 11.6 4.6 13.9 8 15.2 C11.4 13.9 14.1 11.6 14.1 8.2 V2.8 C12 2.8 10 2.4 8 1.2 Z" fill="#1f63c8"></path><path d="M8 1.2 C6 2.4 4 2.8 1.9 2.8 V8 H8 Z" fill="#29a6ee"></path><path d="M8 1.2 C10 2.4 12 2.8 14.1 2.8 V8 H8 Z" fill="#2b7fdc"></path><path d="M8 8 H14.1 V8.2 C14.1 11.6 11.4 13.9 8 15.2 Z" fill="#163e98"></path></svg><circle cx="155.10" cy="872.70" r="13.20" fill="rgba(30,50,90,.10)"></circle><circle cx="154.80" cy="871.80" r="12.80" fill="#fff" stroke="#d9dde4" stroke-width="1"></circle><svg x="146.30" y="863.30" width="17" height="17" viewBox="0 0 16 16" overflow="visible"><g fill="none" stroke="#0e1a33" stroke-width="1.25" stroke-linejoin="round" stroke-linecap="round"><rect x="2.1" y="3.2" width="8.5" height="2.8" rx="1.4"></rect><path d="M14 2.6 A2.2 2.2 0 1 0 14 6.5"></path><path d="M2.9 6 L5.9 10.4 M6.6 6 L10.4 10"></path><path d="M5.9 10.4 L5.2 13.7 H11.2 L10.4 10"></path></g><circle cx="8" cy="11.9" r=".6" fill="#0e1a33"></circle></svg><circle cx="177.60" cy="872.70" r="13.20" fill="rgba(30,50,90,.10)"></circle><circle cx="177.30" cy="871.80" r="12.80" fill="#fff" stroke="#d9dde4" stroke-width="1"></circle><svg x="168.80" y="863.30" width="17" height="17" viewBox="0 0 16 16" overflow="visible"><path d="M0.4 2.4 L3 2.7 L7 5.3 L6.4 8.6 L2.6 6.3 L0.7 4.6 Z" fill="#f05a5a" opacity=".55"></path><path d="M6 5.1 L9.6 6.3 L12 8.5 L15.2 11.6 L14.4 13 L12.6 13.3 L11.7 14.7 L9 12.6 L6.6 9.9 L5.7 8.1 Z" fill="#e8141c"></path><circle cx="5.8" cy="10.8" r="1.1" fill="#e8141c" opacity=".75"></circle></svg><circle cx="200.10" cy="872.70" r="13.20" fill="rgba(30,50,90,.10)"></circle><circle cx="199.80" cy="871.80" r="12.80" fill="#fff" stroke="#d9dde4" stroke-width="1"></circle></g></svg>
<span class="t m" style="color: rgb(44, 95, 217); font-size: 13.37px; top: 865.08px; left: 192.18px;">+5</span>
<span class="t " style="color: rgb(93, 108, 128); font-size: 12.5px; top: 840.62px; transform: scaleX(0.924); left: 284.9px;">Tags</span>
<span class="t " style="color: rgb(93, 108, 128); font-size: 12.5px; top: 840.62px; transform: scaleX(0.8925); left: 340px;">SLA</span>
<span class="t sb" style="color: rgb(14, 26, 51); font-size: 22.24px; top: 857.48px; transform: scaleX(0.756); left: 284.9px;">64</span>
<span class="t sb" style="color: rgb(14, 26, 51); font-size: 22.24px; top: 857.48px; transform: scaleX(0.7379); left: 340px;">2.7%</span>
<div class="a" style="left:80.2px;top:919.0px;width:315.4px;height:176px;border-radius:8px;background:#fff;border:1.5px solid #dfe2e7;box-shadow:0 1px 3px rgba(0,0,0,.07)"></div>
<div class="a" style="left:95.6px;top:934.3px;width:60px;height:60px;border-radius:50%;background:radial-gradient(circle,#fff 0,#fff 23.6px,#2cc281 24.1px,#25bd78 27.4px,rgba(37,189,120,.5) 28.7px,rgba(37,189,120,0) 30px)"></div>
<span class="t bd sl" style="color: rgb(14, 26, 51); font-size: 22.38px; top: 954.25px; transform: scaleX(0.5318); left: 121.8px;">A</span>
<span class="t m" style="color: rgb(14, 26, 51); font-size: 14.83px; top: 937.35px; transform: scaleX(0.9709); left: 176.8px;">Operational Technology</span>
<svg style="left:0;top:0" width="1" height="1"><path d="M185.20 984.00 L235.00 984.00 Q240.00 984.00 245.00 983.96 L275.00 983.74 Q280.00 983.70 284.60 983.85 L284.60 983.85 Q289.20 984.00 292.26 987.96 L294.94 991.44 Q298.00 995.40 301.09 999.33 L307.90 1008.00" fill="none" stroke="#fff" stroke-width="4" stroke-linejoin="round" stroke-linecap="round" opacity=".85"></path><path d="M185.20 984.00 L235.00 984.00 Q240.00 984.00 245.00 983.96 L275.00 983.74 Q280.00 983.70 284.60 983.85 L284.60 983.85 Q289.20 984.00 292.26 987.96 L294.94 991.44 Q298.00 995.40 301.09 999.33 L307.90 1008.00" fill="none" stroke="#0f52ec" stroke-width="2.1" stroke-linejoin="round" stroke-linecap="round"></path><circle cx="307.9" cy="1008.0" r="5.6" fill="#a9cdfb" opacity=".9"></circle><circle cx="307.9" cy="1008.0" r="4.4" fill="#fff"></circle><circle cx="307.9" cy="1008.0" r="2.6" fill="#0f52ec"></circle></svg>
<span class="t bd" style="color: rgb(14, 26, 51); font-size: 10.76px; top: 1003.3px; transform: scaleX(0.9191); left: 319.3px;">66</span>
<span class="t " style="color: rgb(28, 37, 54); font-size: 10.76px; top: 964.6px; transform: scaleX(0.9191); left: 180.5px;">67</span>
<svg style="left:0;top:0" width="1" height="1"><polygon points="186.0,976.2 182.8,979.8 189.2,979.8" fill="#0f52ec"></polygon></svg>
<span class="t " style="color: rgb(14, 26, 51); font-size: 39.24px; top: 123.78px; transform: scaleX(0.6476); left: 472px;">Global Exposure Card</span>
<span class="t " style="color: rgb(53, 105, 214); font-size: 13.08px; top: 168.93px; transform: scaleX(0.844); left: 472px;">986 Assets</span>
<svg style="left:0;top:0" width="1" height="1"><circle cx="533.5" cy="176" r="1.4" fill="#3a475b"></circle><circle cx="734" cy="176" r="1.4" fill="#3a475b"></circle><circle cx="994.4" cy="176" r="1.4" fill="#3a475b"></circle></svg>
<span class="t " style="color: rgb(58, 71, 91); font-size: 13.08px; top: 168.93px; transform: scaleX(0.9397); left: 541.6px;">Last Update: 8 Apr 2025 at 10:39</span>
<span class="t " style="color: rgb(58, 71, 91); font-size: 13.08px; top: 168.93px; transform: scaleX(0.9339); left: 742px;">8 Sources</span>
<svg style="left:0;top:0" width="1" height="1"><circle cx="814.30" cy="175.9" r="12.6" fill="rgba(30,50,90,.09)"></circle><circle cx="814.00" cy="175" r="12.2" fill="#fff" stroke="#d9dde4" stroke-width="1"></circle><svg x="805.50" y="166.50" width="17" height="17" viewBox="0 0 16 16" overflow="visible"><path d="M10.9 2.8 C9.6 1.9 8.7 1.8 8 1.85 C6.2 1.95 4.4 2.8 3.4 3.7 V10.2 C4.5 12.6 6.3 13.8 8 14.65 C9.7 13.8 11.8 12.6 13.05 10.1 V3.9" fill="none" stroke="#0e1a33" stroke-width="1.3" stroke-linejoin="round" stroke-linecap="round"></path><path d="M10.9 2.8 L9.7 4 L11 5.5 L9.7 6.7 L11 8.2 L9.4 9.8" fill="none" stroke="#0e1a33" stroke-width="1.25" stroke-linejoin="round" stroke-linecap="round"></path></svg><circle cx="836.90" cy="175.9" r="12.6" fill="rgba(30,50,90,.09)"></circle><circle cx="836.60" cy="175" r="12.2" fill="#fff" stroke="#d9dde4" stroke-width="1"></circle><svg x="828.10" y="166.50" width="17" height="17" viewBox="0 0 16 16" overflow="visible"><path d="M8 1 Q4.6 1 2.1 2.8 V8.4 C2.1 12 4.8 14 8 15.4 C11.2 14 13.9 12 13.9 8.4 V2.8 Q11.4 1 8 1 Z" fill="#e3101f"></path><circle cx="8" cy="7.3" r="3.3" fill="none" stroke="#fff" stroke-width="1.2"></circle><path d="M9.6 10.2 L11.4 12.6" stroke="#fff" stroke-width="1.2"></path></svg><circle cx="859.50" cy="175.9" r="12.6" fill="rgba(30,50,90,.09)"></circle><circle cx="859.20" cy="175" r="12.2" fill="#fff" stroke="#d9dde4" stroke-width="1"></circle><svg x="850.70" y="166.50" width="17" height="17" viewBox="0 0 16 16" overflow="visible"><path d="M8 1.7 C6.2 1.8 4.4 2.4 3.3 3.2 V10.2 C4.4 12.4 6.2 13.7 8 14.5 C9.8 13.7 11.9 12.4 13.1 10.2 V3.2 C11.8 2.4 9.8 1.8 8 1.7 Z" fill="none" stroke="#0e1a33" stroke-width="1.3" stroke-linejoin="round"></path><circle cx="8.2" cy="5.9" r="2.05" fill="none" stroke="#0e1a33" stroke-width="1.2"></circle><path d="M4.5 11.7 C5 10.2 5.6 9.6 6.4 9.6 H10 C10.8 9.6 11.5 10.2 12 11.7" fill="none" stroke="#0e1a33" stroke-width="1.2"></path></svg><circle cx="882.10" cy="175.9" r="12.6" fill="rgba(30,50,90,.09)"></circle><circle cx="881.80" cy="175" r="12.2" fill="#fff" stroke="#d9dde4" stroke-width="1"></circle><svg x="873.30" y="166.50" width="17" height="17" viewBox="0 0 16 16" overflow="visible"><g fill="none" stroke="#0e1a33" stroke-width="1.25" stroke-linejoin="round" stroke-linecap="round"><rect x="2.1" y="3.2" width="8.5" height="2.8" rx="1.4"></rect><path d="M14 2.6 A2.2 2.2 0 1 0 14 6.5"></path><path d="M2.9 6 L5.9 10.4 M6.6 6 L10.4 10"></path><path d="M5.9 10.4 L5.2 13.7 H11.2 L10.4 10"></path></g><circle cx="8" cy="11.9" r=".6" fill="#0e1a33"></circle></svg><circle cx="904.70" cy="175.9" r="12.6" fill="rgba(30,50,90,.09)"></circle><circle cx="904.40" cy="175" r="12.2" fill="#fff" stroke="#d9dde4" stroke-width="1"></circle><svg x="895.90" y="166.50" width="17" height="17" viewBox="0 0 16 16" overflow="visible"><path d="M4.4 12.9 H11.8 A2.8 2.8 0 0 0 12.5 7.5 A3.8 3.8 0 0 0 5.4 5.3 A3.85 3.85 0 0 0 4.4 12.9 Z" fill="none" stroke="#0e1a33" stroke-width="1.2" stroke-linejoin="round"></path></svg><circle cx="927.30" cy="175.9" r="12.6" fill="rgba(30,50,90,.09)"></circle><circle cx="927.00" cy="175" r="12.2" fill="#fff" stroke="#d9dde4" stroke-width="1"></circle><svg x="918.50" y="166.50" width="17" height="17" viewBox="0 0 16 16" overflow="visible"><path d="M8 1.2 C6 2.4 4 2.8 1.9 2.8 V8.2 C1.9 11.6 4.6 13.9 8 15.2 C11.4 13.9 14.1 11.6 14.1 8.2 V2.8 C12 2.8 10 2.4 8 1.2 Z" fill="#1f63c8"></path><path d="M8 1.2 C6 2.4 4 2.8 1.9 2.8 V8 H8 Z" fill="#29a6ee"></path><path d="M8 1.2 C10 2.4 12 2.8 14.1 2.8 V8 H8 Z" fill="#2b7fdc"></path><path d="M8 8 H14.1 V8.2 C14.1 11.6 11.4 13.9 8 15.2 Z" fill="#163e98"></path></svg><circle cx="949.90" cy="175.9" r="12.6" fill="rgba(30,50,90,.09)"></circle><circle cx="949.60" cy="175" r="12.2" fill="#fff" stroke="#d9dde4" stroke-width="1"></circle><svg x="941.10" y="166.50" width="17" height="17" viewBox="0 0 16 16" overflow="visible"><g fill="none" stroke="#3412d6" stroke-width="2" stroke-linejoin="round"><path d="M2.6 5.4 L8 1.7 L13.4 5.4"></path><path d="M5 6.4 L11 8.6"></path><path d="M2.6 9.8 L8 13.6 L13.4 9.8"></path></g></svg><circle cx="972.50" cy="175.9" r="12.6" fill="rgba(30,50,90,.09)"></circle><circle cx="972.20" cy="175" r="12.2" fill="#fff" stroke="#d9dde4" stroke-width="1"></circle><svg x="963.70" y="166.50" width="17" height="17" viewBox="0 0 16 16" overflow="visible"><path d="M0.4 2.4 L3 2.7 L7 5.3 L6.4 8.6 L2.6 6.3 L0.7 4.6 Z" fill="#f05a5a" opacity=".55"></path><path d="M6 5.1 L9.6 6.3 L12 8.5 L15.2 11.6 L14.4 13 L12.6 13.3 L11.7 14.7 L9 12.6 L6.6 9.9 L5.7 8.1 Z" fill="#e8141c"></path><circle cx="5.8" cy="10.8" r="1.1" fill="#e8141c" opacity=".75"></circle></svg></svg>
<span class="t " style="color: rgb(53, 105, 214); font-size: 12.79px; top: 168.67px; transform: scaleX(0.8339); left: 1006.8px;">Show Details</span>
<svg style="left:0;top:0" width="1" height="1"><path d="M1081.3 172.3 l3.3 3.6 l-3.3 3.6" fill="none" stroke="#3569d6" stroke-width="1.4"></path></svg>
<div class="a" style="left:472px;top:205.2px;width:1253px;height:1.6px;background:#8f979f"></div>
<div class="a" style="left:1397px;top:121.2px;width:230px;height:37.1px;border-radius:19px;background:#ededee"></div>
<div class="a" style="left:1514.3px;top:121.2px;width:112.7px;height:37.1px;border-radius:19px;background:#fff;border:1px solid #cfd2d8;box-shadow:0 1px 2px rgba(0,0,0,.06)"></div>
<span class="t bd" style="color: rgb(14, 26, 51); font-size: 14.39px; top: 132.92px; transform: scaleX(0.7684); left: 1437.35px;">Score</span>
<span class="t bd" style="color: rgb(14, 26, 51); font-size: 14.39px; top: 132.92px; transform: scaleX(0.7699); left: 1537.8px;">Score (Beta)</span>
<div class="a" style="left:1639.7px;top:120.1px;width:39px;height:39px;border-radius:50%;background:#fff;border:1px solid #dfe2e8;box-shadow:0 1px 3px rgba(0,0,0,.08)"></div>
<div class="a" style="left:1686.8px;top:120.1px;width:39px;height:39px;border-radius:50%;background:#fff;border:1px solid #dfe2e8;box-shadow:0 1px 3px rgba(0,0,0,.08)"></div>
<div class="a" style="left:1686.8px;top:233.7px;width:39px;height:39px;border-radius:50%;background:#fff;border:1px solid #dfe2e8;box-shadow:0 1px 3px rgba(0,0,0,.08)"></div>
<svg style="left:0;top:0" width="1" height="1"><path d="M1651.9 133.3 h14.4 v10.6 h-10.4 l-4 3.6 z" fill="none" stroke="#3b73dc" stroke-width="1.3" stroke-linejoin="round"></path></svg>
<svg style="left:0;top:0" width="1" height="1"><circle cx="1700.6" cy="139.6" r="1.5" fill="#0e1a33"></circle><circle cx="1706.3" cy="139.6" r="1.5" fill="#0e1a33"></circle><circle cx="1712" cy="139.6" r="1.5" fill="#0e1a33"></circle></svg>
<svg style="left:0;top:0" width="1" height="1"><g fill="none" stroke="#3b73dc" stroke-width="1.2" stroke-linecap="round" stroke-linejoin="round"><path d="M1706.3 246.7 v10 M1702.3 252.7 l4 4 l4-4 M1699.6 256.59999999999997 v3.4 h13.4 v-3.4"></path></g></svg>
<svg style="left:0;top:0" width="1" height="1"><path d="M484.3 250.3 l6.3 6.3 l6.3-6.3" fill="none" stroke="#0e1a33" stroke-width="1.5"></path></svg>
<span class="t m" style="color: rgb(14, 26, 51); font-size: 22.82px; top: 241.08px; transform: scaleX(0.8981); left: 514.1px;">Overall score</span>
<svg style="left:0;top:0" width="1" height="1"><defs><filter id="gl" x="-20%" y="-20%" width="140%" height="140%"><feGaussianBlur stdDeviation="2.6"></feGaussianBlur></filter><filter id="gl2" x="-20%" y="-20%" width="140%" height="140%"><feGaussianBlur stdDeviation="6.5"></feGaussianBlur></filter></defs><circle cx="775.8" cy="543.9" r="211.3" fill="none" stroke="#f6d84a" stroke-width="7" opacity=".6" filter="url(#gl)"></circle><circle cx="775.8" cy="543.9" r="211.3" fill="none" stroke="#f6c517" stroke-width="3.2"></circle><circle cx="776.2" cy="543.9" r="104" fill="#f3da66" opacity="1" filter="url(#gl2)"></circle><circle cx="776" cy="543.9" r="125.6" fill="none" stroke="#6f778a" stroke-width="1.7" stroke-dasharray="2.4 2.6"></circle></svg>
<div class="a" style="left:672.2px;top:439.9px;width:208px;height:208px;border-radius:50%;background:radial-gradient(circle,#2dcc85 0,#2dcc85 58px,#5ecb66 71px,#a5cc48 85px,#cfcf3e 94px,#e2ca34 100px,#f0c62c 103px,#f2c52a 104px)"></div>
<div class="a" style="left:723.7px;top:491.79999999999995px;width:104px;height:104px;border-radius:50%;background:#fff"></div>
<svg style="left:0;top:0" width="1" height="1"><line x1="775.5" y1="333.5" x2="775.5" y2="491" stroke="#a9aeb7" stroke-width="1.2"></line></svg>
<div class="a" style="left:757.6px;top:410.9px;width:34.8px;height:17px;border-radius:9px;background:#fff;border:1px solid #c4c8cf"></div>
<span class="t " style="color: rgb(28, 37, 54); font-size: 12.5px; top: 412.72px; transform: scaleX(0.839); left: 766.45px;">500</span>
<span class="t " style="color: rgb(28, 37, 54); font-size: 12.79px; top: 312.97px; transform: scaleX(0.9143); left: 762.5px;">1000</span>
<span class="t " style="color: rgb(28, 37, 54); font-size: 12.5px; top: 496.42px; transform: scaleX(0.8629); left: 772.5px;">0</span>
<span class="t bd" style="color: rgb(14, 26, 51); font-size: 42.15px; top: 515.32px; transform: scaleX(0.6242); left: 767.3px;">B</span>
<span class="t bd" style="color: rgb(14, 26, 51); font-size: 12.79px; top: 559.17px; transform: scaleX(0.9143); left: 751.8px;">352</span>
<span class="t " style="color: rgb(28, 37, 54); font-size: 12.79px; top: 559.17px; transform: scaleX(0.8879); left: 771.3px;">/1000</span>
<div class="a" style="left:592.5px;top:802px;width:366.8px;height:36.8px;border-radius:19px;background:#eceef2"></div>
<div class="a" style="left:592.5px;top:802px;width:112px;height:36.8px;border-radius:19px;background:#fff;border:1px solid #c9cdd4;box-shadow:0 1px 2px rgba(0,0,0,.07)"></div>
<span class="t m" style="color: rgb(14, 26, 51); font-size: 15.7px; top: 815.01px; transform: scaleX(0.9656); left: 632.5px;">Total</span>
<span class="t m" style="color: rgb(14, 26, 51); font-size: 15.7px; top: 815.01px; transform: scaleX(0.8943); left: 733.3px;">Per Exposure</span>
<span class="t m" style="color: rgb(14, 26, 51); font-size: 15.7px; top: 815.01px; transform: scaleX(0.8702); left: 880px;">Per Tag</span>
<span class="t m" style="color: rgb(14, 26, 51); font-size: 14.53px; top: 870.2px; transform: scaleX(0.9704); left: 587px;">Score</span>
<svg style="left:0;top:0" width="1" height="1"><circle cx="638.3" cy="877" r="6" fill="none" stroke="#3b73dc" stroke-width="1.2"></circle><line x1="638.3" y1="875.6" x2="638.3" y2="880.6" stroke="#3b73dc" stroke-width="1.3"></line><circle cx="638.3" cy="873.3" r=".9" fill="#3b73dc"></circle></svg>
<span class="t " style="color: rgb(14, 26, 51); font-size: 14.53px; top: 873.7px; transform: scaleX(0.929); left: 675px;">A</span>
<span class="t " style="color: rgb(138, 146, 156); font-size: 11.05px; top: 894.35px; transform: scaleX(0.8138); left: 660px;">0 - 199</span>
<span class="t " style="color: rgb(14, 26, 51); font-size: 14.53px; top: 873.7px; transform: scaleX(0.929); left: 715px;">B</span>
<span class="t " style="color: rgb(138, 146, 156); font-size: 11.05px; top: 894.35px; transform: scaleX(0.8782); left: 699.5px;">200 - 399</span>
<span class="t " style="color: rgb(14, 26, 51); font-size: 14.53px; top: 873.7px; transform: scaleX(0.9538); left: 767px;">C</span>
<span class="t " style="color: rgb(138, 146, 156); font-size: 11.05px; top: 894.35px; transform: scaleX(0.8889); left: 751.5px;">400 - 599</span>
<span class="t " style="color: rgb(14, 26, 51); font-size: 14.53px; top: 873.7px; transform: scaleX(0.9061); left: 819.5px;">D</span>
<span class="t " style="color: rgb(138, 146, 156); font-size: 11.05px; top: 894.35px; transform: scaleX(0.8782); left: 804px;">600 - 799</span>
<span class="t " style="color: rgb(14, 26, 51); font-size: 14.53px; top: 873.7px; transform: scaleX(0.9014); left: 871px;">F</span>
<span class="t " style="color: rgb(138, 146, 156); font-size: 11.05px; top: 894.35px; transform: scaleX(0.866); left: 856px;">800 - 1000</span>
<svg style="left:0;top:0" width="1" height="1"><circle cx="665.5" cy="880.5" r="5.4" fill="#25c07f"></circle><circle cx="704.5" cy="880.5" r="5.4" fill="#f7c928"></circle><circle cx="757.5" cy="880.5" r="5.4" fill="#f5900f"></circle><circle cx="810" cy="880.5" r="5.4" fill="#ee4a32"></circle><circle cx="861.75" cy="880.5" r="5.4" fill="#d5063a"></circle><line x1="912.5" y1="888.7" x2="927.5" y2="888.7" stroke="#8d93a3" stroke-width="1.5" stroke-dasharray="3 3"></line></svg>
<span class="t m" style="color: rgb(14, 26, 51); font-size: 12.79px; top: 882.17px; transform: scaleX(0.8865); left: 933px;">Target</span>
<span class="t " style="color: rgb(59, 80, 104); font-size: 28.78px; top: 359.84px; transform: scaleX(0.6991); left: 1152.1px;">Your score is</span>
<span class="t " style="color: rgb(14, 26, 51); font-size: 28.78px; top: 359.84px; transform: scaleX(0.7164); left: 1276px;">inside target.</span>
<span class="t " style="color: rgb(59, 80, 104); font-size: 28.49px; top: 393.48px; transform: scaleX(0.7196); left: 1152.1px;">2 categories need attention.</span>
<span class="t bd" style="color: rgb(14, 26, 51); font-size: 13.08px; top: 453.33px; transform: scaleX(0.8342); left: 1151.5px;">Benchmarks</span>
<div class="a" style="left:1150.5px;top:477.7px;width:34px;height:34px;border-radius:50%;background:radial-gradient(circle,#fff 0,#fff 12.9px,#2ec45c 13.3px,#3ac55a 14.6px,#b6c736 15.4px,#ecc41c 15.9px,rgba(240,196,28,.45) 16.4px,rgba(240,196,28,0) 17px)"></div>
<div class="a" style="left:1292.5px;top:477.7px;width:34px;height:34px;border-radius:50%;background:radial-gradient(circle,#fff 0,#fff 12.9px,#2ec45c 13.3px,#3ac55a 14.6px,#b6c736 15.4px,#ecc41c 15.9px,rgba(240,196,28,.45) 16.4px,rgba(240,196,28,0) 17px)"></div>
<span class="t sb" style="color: rgb(14, 26, 51); font-size: 14.97px; top: 487.53px; transform: scaleX(0.621); left: 1164.5px;">B</span>
<span class="t sb" style="color: rgb(14, 26, 51); font-size: 14.97px; top: 487.53px; transform: scaleX(0.621); left: 1306.5px;">B</span>
<span class="t " style="color: rgb(31, 42, 62); font-size: 13.08px; top: 480.43px; transform: scaleX(0.8906); left: 1191.4px;">Total Population</span>
<span class="t bd" style="color: rgb(14, 26, 51); font-size: 13.08px; top: 496.13px; transform: scaleX(0.9162); left: 1191.4px;">264</span>
<span class="t " style="color: rgb(138, 146, 156); font-size: 13.08px; top: 496.13px; transform: scaleX(0.8309); left: 1211.4px;">/1000</span>
<span class="t " style="color: rgb(31, 42, 62); font-size: 13.08px; top: 480.43px; transform: scaleX(0.8835); left: 1334px;">Industry: Government</span>
<span class="t bd" style="color: rgb(14, 26, 51); font-size: 13.08px; top: 496.13px; transform: scaleX(0.9162); left: 1334px;">278</span>
<span class="t " style="color: rgb(138, 146, 156); font-size: 13.08px; top: 496.13px; transform: scaleX(0.8157); left: 1354px;">/1000</span>
<span class="t bd" style="color: rgb(14, 26, 51); font-size: 12.79px; top: 551.67px; transform: scaleX(0.8277); left: 1151.5px;">Change</span>
<svg style="left:0;top:0" width="1" height="1"><circle cx="1169.1" cy="590.1" r="17" fill="#fff" stroke="#1f2a44" stroke-width="1.5"></circle><circle cx="1169.1" cy="590.1" r="6.7" fill="none" stroke="#c9cdd5" stroke-width="1.1"></circle><g stroke="#1f2a44" stroke-width="1.3" fill="none"><path d="M1158.9 579.9 l5 5 M1158.9 579.9 h3.6 M1158.9 579.9 v3.6"></path><path d="M1179.3 579.9 l-5 5 M1179.3 579.9 h-3.6 M1179.3 579.9 v3.6"></path><path d="M1158.9 600.3 l5-5 M1158.9 600.3 h3.6 M1158.9 600.3 v-3.6"></path><path d="M1179.3 600.3 l-5-5 M1179.3 600.3 h-3.6 M1179.3 600.3 v-3.6"></path></g></svg>
<span class="t " style="color: rgb(14, 26, 51); font-size: 16.86px; top: 583.03px; transform: scaleX(0.8146); left: 1196.9px;">Score worsened by 22% over the last 30 days</span>
<span class="t bd" style="color: rgb(14, 26, 51); font-size: 13.52px; top: 642.86px; transform: scaleX(0.8008); left: 1151.5px;">Asset Risk Breakdown</span>
<div class="a" style="left:1150.3px;top:670.4px;width:171.70000000000005px;height:159.6px;border-radius:10px;background:#fff;border:1.5px solid #dfe2e7;box-shadow:0 1px 4px rgba(0,0,0,.08)"></div>
<span class="t sb" style="color: rgb(14, 26, 51); font-size: 21.22px; top: 682.04px; transform: scaleX(0.7243); left: 1157.7px;">37</span>
<span class="t " style="color: rgb(106, 125, 149); font-size: 13.95px; top: 688.19px; transform: scaleX(0.8302); left: 1174.8px;">%</span>
<span class="t m" style="color: rgb(14, 26, 51); font-size: 13.95px; top: 678.19px; transform: scaleX(0.9175); left: 1192px;">Assets with Critical</span>
<span class="t m" style="color: rgb(14, 26, 51); font-size: 13.95px; top: 691.89px; transform: scaleX(0.9684); left: 1192px;">Risks</span>
<svg style="left:0;top:0" width="1" height="1"><svg x="1156.00" y="711.70" width="19" height="19" viewBox="0 0 16 16" overflow="visible"><path d="M4.4 12.9 H11.8 A2.8 2.8 0 0 0 12.5 7.5 A3.8 3.8 0 0 0 5.4 5.3 A3.85 3.85 0 0 0 4.4 12.9 Z" fill="none" stroke="#0e1a33" stroke-width="1.2" stroke-linejoin="round"></path></svg><rect x="1183.6" y="717.2" width="131.3" height="8" rx="4" fill="#e1e1e1"></rect><rect x="1183.6" y="717.2" width="7.7" height="8" rx="4" fill="#d5003b"></rect><rect x="1187.6" y="717.2" width="0.0" height="8" fill="#d5003b"></rect><svg x="1156.00" y="735.00" width="19" height="19" viewBox="0 0 16 16" overflow="visible"><path d="M8 1.7 C6.2 1.8 4.4 2.4 3.3 3.2 V10.2 C4.4 12.4 6.2 13.7 8 14.5 C9.8 13.7 11.9 12.4 13.1 10.2 V3.2 C11.8 2.4 9.8 1.8 8 1.7 Z" fill="none" stroke="#0e1a33" stroke-width="1.3" stroke-linejoin="round"></path><circle cx="8.2" cy="5.9" r="2.05" fill="none" stroke="#0e1a33" stroke-width="1.2"></circle><path d="M4.5 11.7 C5 10.2 5.6 9.6 6.4 9.6 H10 C10.8 9.6 11.5 10.2 12 11.7" fill="none" stroke="#0e1a33" stroke-width="1.2"></path></svg><rect x="1183.6" y="740.5" width="131.3" height="8" rx="4" fill="#e1e1e1"></rect><rect x="1183.6" y="740.5" width="123.4" height="8" rx="4" fill="#d5003b"></rect><rect x="1303.0" y="740.5" width="4.0" height="8" fill="#d5003b"></rect><svg x="1156.00" y="758.30" width="19" height="19" viewBox="0 0 16 16" overflow="visible"><g fill="none" stroke="#0e1a33" stroke-width="1.25" stroke-linejoin="round" stroke-linecap="round"><rect x="2.1" y="3.2" width="8.5" height="2.8" rx="1.4"></rect><path d="M14 2.6 A2.2 2.2 0 1 0 14 6.5"></path><path d="M2.9 6 L5.9 10.4 M6.6 6 L10.4 10"></path><path d="M5.9 10.4 L5.2 13.7 H11.2 L10.4 10"></path></g><circle cx="8" cy="11.9" r=".6" fill="#0e1a33"></circle></svg><rect x="1183.6" y="763.8" width="131.3" height="8" rx="4" fill="#e1e1e1"></rect><svg x="1156.00" y="781.70" width="19" height="19" viewBox="0 0 16 16" overflow="visible"><path d="M10.9 2.8 C9.6 1.9 8.7 1.8 8 1.85 C6.2 1.95 4.4 2.8 3.4 3.7 V10.2 C4.5 12.6 6.3 13.8 8 14.65 C9.7 13.8 11.8 12.6 13.05 10.1 V3.9" fill="none" stroke="#0e1a33" stroke-width="1.3" stroke-linejoin="round" stroke-linecap="round"></path><path d="M10.9 2.8 L9.7 4 L11 5.5 L9.7 6.7 L11 8.2 L9.4 9.8" fill="none" stroke="#0e1a33" stroke-width="1.25" stroke-linejoin="round" stroke-linecap="round"></path></svg><rect x="1183.6" y="787.2" width="131.3" height="8" rx="4" fill="#e1e1e1"></rect><rect x="1183.6" y="787.2" width="63.1" height="8" rx="4" fill="#d5003b"></rect><rect x="1242.7" y="787.2" width="4.0" height="8" fill="#d5003b"></rect><svg x="1156.00" y="805.00" width="19" height="19" viewBox="0 0 16 16" overflow="visible"><g fill="none" stroke="#0e1a33" stroke-width="1.1"><circle cx="8" cy="8" r="6.3"></circle><g transform="rotate(-35 8 8)"><ellipse cx="8" cy="8" rx="2.9" ry="6.3"></ellipse><line x1="1.9" y1="5.6" x2="14.1" y2="5.6"></line><line x1="1.9" y1="10.4" x2="14.1" y2="10.4"></line></g></g></svg><rect x="1183.6" y="810.5" width="131.3" height="8" rx="4" fill="#e1e1e1"></rect><rect x="1183.6" y="810.5" width="65.3" height="8" rx="4" fill="#d5003b"></rect><rect x="1244.9" y="810.5" width="4.0" height="8" fill="#d5003b"></rect></svg>
<div class="a" style="left:1335px;top:670.4px;width:171.20000000000005px;height:159.6px;border-radius:10px;background:#fff;border:1.5px solid #dfe2e7;box-shadow:0 1px 4px rgba(0,0,0,.08)"></div>
<span class="t sb" style="color: rgb(14, 26, 51); font-size: 21.22px; top: 682.04px; transform: scaleX(0.745); left: 1342.4px;">9</span>
<span class="t " style="color: rgb(106, 125, 149); font-size: 13.95px; top: 688.19px; transform: scaleX(0.8463); left: 1351px;">%</span>
<span class="t m" style="color: rgb(14, 26, 51); font-size: 13.95px; top: 683.49px; transform: scaleX(0.8938); left: 1368px;">Assets with High Risks</span>
<svg style="left:0;top:0" width="1" height="1"><svg x="1340.80" y="707.60" width="19" height="19" viewBox="0 0 16 16" overflow="visible"><path d="M4.4 12.9 H11.8 A2.8 2.8 0 0 0 12.5 7.5 A3.8 3.8 0 0 0 5.4 5.3 A3.85 3.85 0 0 0 4.4 12.9 Z" fill="none" stroke="#0e1a33" stroke-width="1.2" stroke-linejoin="round"></path></svg><rect x="1368.7" y="713.1" width="130.0" height="8" rx="4" fill="#e1e1e1"></rect><rect x="1368.7" y="713.1" width="38.9" height="8" rx="4" fill="#f04b36"></rect><rect x="1403.6" y="713.1" width="4.0" height="8" fill="#f04b36"></rect><svg x="1340.80" y="731.00" width="19" height="19" viewBox="0 0 16 16" overflow="visible"><path d="M8 1.7 C6.2 1.8 4.4 2.4 3.3 3.2 V10.2 C4.4 12.4 6.2 13.7 8 14.5 C9.8 13.7 11.9 12.4 13.1 10.2 V3.2 C11.8 2.4 9.8 1.8 8 1.7 Z" fill="none" stroke="#0e1a33" stroke-width="1.3" stroke-linejoin="round"></path><circle cx="8.2" cy="5.9" r="2.05" fill="none" stroke="#0e1a33" stroke-width="1.2"></circle><path d="M4.5 11.7 C5 10.2 5.6 9.6 6.4 9.6 H10 C10.8 9.6 11.5 10.2 12 11.7" fill="none" stroke="#0e1a33" stroke-width="1.2"></path></svg><rect x="1368.7" y="736.5" width="130.0" height="8" rx="4" fill="#e1e1e1"></rect><rect x="1368.7" y="736.5" width="6.2" height="8" rx="4" fill="#f04b36"></rect><rect x="1372.7" y="736.5" width="0.0" height="8" fill="#f04b36"></rect><svg x="1340.80" y="754.30" width="19" height="19" viewBox="0 0 16 16" overflow="visible"><g fill="none" stroke="#0e1a33" stroke-width="1.25" stroke-linejoin="round" stroke-linecap="round"><rect x="2.1" y="3.2" width="8.5" height="2.8" rx="1.4"></rect><path d="M14 2.6 A2.2 2.2 0 1 0 14 6.5"></path><path d="M2.9 6 L5.9 10.4 M6.6 6 L10.4 10"></path><path d="M5.9 10.4 L5.2 13.7 H11.2 L10.4 10"></path></g><circle cx="8" cy="11.9" r=".6" fill="#0e1a33"></circle></svg><rect x="1368.7" y="759.8" width="130.0" height="8" rx="4" fill="#e1e1e1"></rect><svg x="1340.80" y="777.60" width="19" height="19" viewBox="0 0 16 16" overflow="visible"><path d="M10.9 2.8 C9.6 1.9 8.7 1.8 8 1.85 C6.2 1.95 4.4 2.8 3.4 3.7 V10.2 C4.5 12.6 6.3 13.8 8 14.65 C9.7 13.8 11.8 12.6 13.05 10.1 V3.9" fill="none" stroke="#0e1a33" stroke-width="1.3" stroke-linejoin="round" stroke-linecap="round"></path><path d="M10.9 2.8 L9.7 4 L11 5.5 L9.7 6.7 L11 8.2 L9.4 9.8" fill="none" stroke="#0e1a33" stroke-width="1.25" stroke-linejoin="round" stroke-linecap="round"></path></svg><rect x="1368.7" y="783.1" width="130.0" height="8" rx="4" fill="#e1e1e1"></rect><rect x="1368.7" y="783.1" width="14.0" height="8" rx="4" fill="#f04b36"></rect><rect x="1378.7" y="783.1" width="4.0" height="8" fill="#f04b36"></rect><svg x="1340.80" y="801.00" width="19" height="19" viewBox="0 0 16 16" overflow="visible"><g fill="none" stroke="#0e1a33" stroke-width="1.1"><circle cx="8" cy="8" r="6.3"></circle><g transform="rotate(-35 8 8)"><ellipse cx="8" cy="8" rx="2.9" ry="6.3"></ellipse><line x1="1.9" y1="5.6" x2="14.1" y2="5.6"></line><line x1="1.9" y1="10.4" x2="14.1" y2="10.4"></line></g></g></svg><rect x="1368.7" y="806.5" width="130.0" height="8" rx="4" fill="#e1e1e1"></rect><rect x="1368.7" y="806.5" width="51.9" height="8" rx="4" fill="#f04b36"></rect><rect x="1416.6" y="806.5" width="4.0" height="8" fill="#f04b36"></rect></svg>
<div class="a" style="left:1519px;top:670.4px;width:171.70000000000005px;height:159.6px;border-radius:10px;background:#fff;border:1.5px solid #dfe2e7;box-shadow:0 1px 4px rgba(0,0,0,.08)"></div>
<span class="t sb" style="color: rgb(14, 26, 51); font-size: 21.22px; top: 682.04px; transform: scaleX(0.6353); left: 1526.4px;">15</span>
<span class="t " style="color: rgb(106, 125, 149); font-size: 13.95px; top: 688.19px; transform: scaleX(0.798); left: 1541.4px;">%</span>
<span class="t m" style="color: rgb(14, 26, 51); font-size: 13.95px; top: 678.19px; transform: scaleX(0.9097); left: 1558.5px;">Assets with Med/Low</span>
<span class="t m" style="color: rgb(14, 26, 51); font-size: 13.95px; top: 691.89px; transform: scaleX(0.9684); left: 1558.5px;">Risks</span>
<svg style="left:0;top:0" width="1" height="1"><svg x="1525.00" y="711.70" width="19" height="19" viewBox="0 0 16 16" overflow="visible"><path d="M4.4 12.9 H11.8 A2.8 2.8 0 0 0 12.5 7.5 A3.8 3.8 0 0 0 5.4 5.3 A3.85 3.85 0 0 0 4.4 12.9 Z" fill="none" stroke="#0e1a33" stroke-width="1.2" stroke-linejoin="round"></path></svg><rect x="1552.9" y="717.2" width="130.7" height="8" rx="4" fill="#e1e1e1"></rect><rect x="1552.9" y="717.2" width="62.5" height="8" rx="4" fill="#f5950f"></rect><rect x="1611.4" y="717.2" width="4.0" height="8" fill="#f5950f"></rect><svg x="1525.00" y="735.00" width="19" height="19" viewBox="0 0 16 16" overflow="visible"><path d="M8 1.7 C6.2 1.8 4.4 2.4 3.3 3.2 V10.2 C4.4 12.4 6.2 13.7 8 14.5 C9.8 13.7 11.9 12.4 13.1 10.2 V3.2 C11.8 2.4 9.8 1.8 8 1.7 Z" fill="none" stroke="#0e1a33" stroke-width="1.3" stroke-linejoin="round"></path><circle cx="8.2" cy="5.9" r="2.05" fill="none" stroke="#0e1a33" stroke-width="1.2"></circle><path d="M4.5 11.7 C5 10.2 5.6 9.6 6.4 9.6 H10 C10.8 9.6 11.5 10.2 12 11.7" fill="none" stroke="#0e1a33" stroke-width="1.2"></path></svg><rect x="1552.9" y="740.5" width="130.7" height="8" rx="4" fill="#e1e1e1"></rect><rect x="1552.9" y="740.5" width="2.5" height="8" rx="4" fill="#f5950f"></rect><rect x="1556.9" y="740.5" width="0.0" height="8" fill="#f5950f"></rect><svg x="1525.00" y="758.30" width="19" height="19" viewBox="0 0 16 16" overflow="visible"><g fill="none" stroke="#0e1a33" stroke-width="1.25" stroke-linejoin="round" stroke-linecap="round"><rect x="2.1" y="3.2" width="8.5" height="2.8" rx="1.4"></rect><path d="M14 2.6 A2.2 2.2 0 1 0 14 6.5"></path><path d="M2.9 6 L5.9 10.4 M6.6 6 L10.4 10"></path><path d="M5.9 10.4 L5.2 13.7 H11.2 L10.4 10"></path></g><circle cx="8" cy="11.9" r=".6" fill="#0e1a33"></circle></svg><rect x="1552.9" y="763.8" width="130.7" height="8" rx="4" fill="#e1e1e1"></rect><svg x="1525.00" y="781.70" width="19" height="19" viewBox="0 0 16 16" overflow="visible"><path d="M10.9 2.8 C9.6 1.9 8.7 1.8 8 1.85 C6.2 1.95 4.4 2.8 3.4 3.7 V10.2 C4.5 12.6 6.3 13.8 8 14.65 C9.7 13.8 11.8 12.6 13.05 10.1 V3.9" fill="none" stroke="#0e1a33" stroke-width="1.3" stroke-linejoin="round" stroke-linecap="round"></path><path d="M10.9 2.8 L9.7 4 L11 5.5 L9.7 6.7 L11 8.2 L9.4 9.8" fill="none" stroke="#0e1a33" stroke-width="1.25" stroke-linejoin="round" stroke-linecap="round"></path></svg><rect x="1552.9" y="787.2" width="130.7" height="8" rx="4" fill="#e1e1e1"></rect><rect x="1552.9" y="787.2" width="31.1" height="8" rx="4" fill="#f5950f"></rect><rect x="1580.0" y="787.2" width="4.0" height="8" fill="#f5950f"></rect><svg x="1525.00" y="805.00" width="19" height="19" viewBox="0 0 16 16" overflow="visible"><g fill="none" stroke="#0e1a33" stroke-width="1.1"><circle cx="8" cy="8" r="6.3"></circle><g transform="rotate(-35 8 8)"><ellipse cx="8" cy="8" rx="2.9" ry="6.3"></ellipse><line x1="1.9" y1="5.6" x2="14.1" y2="5.6"></line><line x1="1.9" y1="10.4" x2="14.1" y2="10.4"></line></g></g></svg><rect x="1552.9" y="810.5" width="130.7" height="8" rx="4" fill="#e1e1e1"></rect><rect x="1552.9" y="810.5" width="12.7" height="8" rx="4" fill="#f5950f"></rect><rect x="1561.6" y="810.5" width="4.0" height="8" fill="#f5950f"></rect></svg>
<div class="a" style="left:472px;top:957.5px;width:1253px;height:1.5px;background:#8f979f"></div>
<svg style="left:0;top:0" width="1" height="1"><path d="M484.3 1003 l6.3 6.3 l6.3-6.3" fill="none" stroke="#0e1a33" stroke-width="1.5"></path></svg>
<span class="t m" style="color: rgb(14, 26, 51); font-size: 21.8px; top: 993.34px; transform: scaleX(0.9779); left: 514px;">Trend</span>
<div class="a" style="left:1686.8px;top:985.0px;width:39px;height:39px;border-radius:50%;background:#fff;border:1px solid #dfe2e8;box-shadow:0 1px 3px rgba(0,0,0,.08)"></div>
<svg style="left:0;top:0" width="1" height="1"><g fill="none" stroke="#3b73dc" stroke-width="1.2" stroke-linecap="round" stroke-linejoin="round"><path d="M1706.3 998.0 v10 M1702.3 1004.0 l4 4 l4-4 M1699.6 1007.9 v3.4 h13.4 v-3.4"></path></g></svg>
<div class="a" style="left:1743.5px;top:506.0px;width:38px;height:38px;border-radius:50%;background:#fff;border:1px solid #dfe2e8;box-shadow:0 1px 3px rgba(0,0,0,.08)"></div>
<svg style="left:0;top:0" width="1" height="1"><path d="M1756.3 518.2 h11.6 a1.6 1.6 0 0 1 1.6 1.6 v7.2 a1.6 1.6 0 0 1 -1.6 1.6 h-8.4 l-4.4 3.4 v-12.2 a1.6 1.6 0 0 1 1.6 -1.6 z" fill="none" stroke="#3b73dc" stroke-width="1.25" stroke-linejoin="round"></path><path d="M1762.9 519.8 v6 M1759.9 522.8 h6" stroke="#3b73dc" stroke-width="1.25"></path></svg>
<div class="a" style="left:1743.5px;top:985.5px;width:38px;height:38px;border-radius:50%;background:#fff;border:1px solid #dfe2e8;box-shadow:0 1px 3px rgba(0,0,0,.08)"></div>
<svg style="left:0;top:0" width="1" height="1"><path d="M1756.3 997.7 h11.6 a1.6 1.6 0 0 1 1.6 1.6 v7.2 a1.6 1.6 0 0 1 -1.6 1.6 h-8.4 l-4.4 3.4 v-12.2 a1.6 1.6 0 0 1 1.6 -1.6 z" fill="none" stroke="#3b73dc" stroke-width="1.25" stroke-linejoin="round"></path><path d="M1762.9 999.3 v6 M1759.9 1002.3 h6" stroke="#3b73dc" stroke-width="1.25"></path></svg>

</body></html>
